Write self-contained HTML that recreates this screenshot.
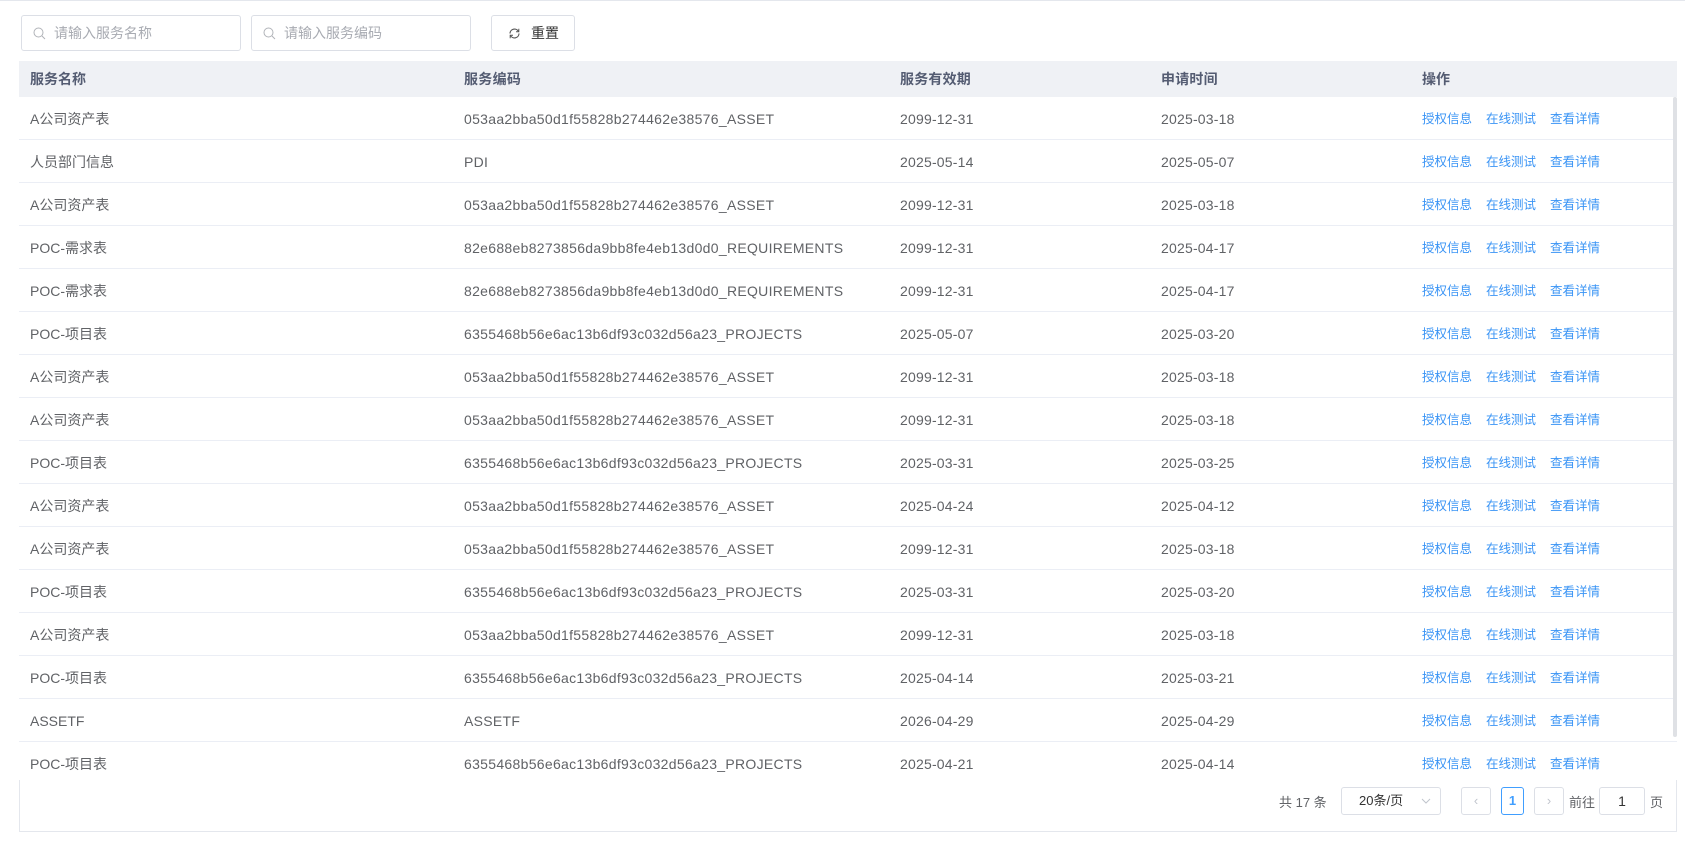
<!DOCTYPE html>
<html><head><meta charset="utf-8"><style>
*{box-sizing:border-box;margin:0;padding:0}
body{width:1685px;height:845px;background:#fff;font-family:"Liberation Sans","Noto Sans CJK SC",sans-serif;font-size:14px;color:#606266;position:relative;overflow:hidden}
.top{position:absolute;left:0;top:0;width:1685px;height:1px;background:#e4e7ed}
.inp{position:absolute;top:15px;height:36px;border:1px solid #dcdfe6;border-radius:3px;color:#a8abb2;font-size:14px;line-height:34px;padding-left:32px}
.inp svg{position:absolute;left:11px;top:11px}
.btn{position:absolute;left:491px;top:15px;width:84px;height:36px;border:1px solid #dcdfe6;border-radius:3px;line-height:34px;font-size:14px;color:#333;padding-left:39px}
.btn svg{position:absolute;left:16px;top:11px}
.tbl{position:absolute;left:19px;top:61px;width:1658px;height:719px;overflow:hidden}
.row{position:absolute;left:0;width:1658px;height:43px;border-bottom:1px solid #ebeef5;line-height:44px}
.hd{background:#eff1f5;height:36px;line-height:36px;font-weight:bold;color:#545c72;border:none}
.row span{position:absolute;white-space:nowrap}
.c1{left:11px}.c2{left:445px;letter-spacing:0.3px}.c3{left:881px;letter-spacing:0.2px}.c4{left:1142px;letter-spacing:0.2px}.c5{left:1403px}
.op{color:#3a94f5;font-size:12.5px}
.sb{position:absolute;left:1673px;top:97px;width:4px;height:640px;background:#dfe1e5;border-radius:2px}
.pg{position:absolute;left:19px;top:780px;width:1658px;height:52px;border:1px solid #e4e7ed;border-top:none;font-size:13px;color:#606266}
.pg div{position:absolute;top:7px;height:28px;line-height:26px;border:1px solid #dcdfe6;border-radius:3px;text-align:center}
</style></head><body>
<div class="top"></div>
<div class="inp" style="left:21px;width:220px"><svg width="13" height="13" viewBox="0 0 13 13"><circle cx="5.5" cy="5.5" r="4.5" fill="none" stroke="#b0b3b8" stroke-width="1"/><path d="M9 9l3 3" stroke="#b0b3b8"/></svg>请输入服务名称</div>
<div class="inp" style="left:251px;width:220px"><svg width="13" height="13" viewBox="0 0 13 13"><circle cx="5.5" cy="5.5" r="4.5" fill="none" stroke="#b0b3b8" stroke-width="1"/><path d="M9 9l3 3" stroke="#b0b3b8"/></svg>请输入服务编码</div>
<div class="btn"><svg width="13" height="13" viewBox="0 0 13 13"><path d="M2 6.5A4.5 4.5 0 0 1 10.5 4.5M11 6.5A4.5 4.5 0 0 1 2.5 8.5" fill="none" stroke="#555" stroke-width="1.1"/><path d="M10.8 1.8v2.9H8" fill="none" stroke="#555"/><path d="M2.2 11.2V8.3H5" fill="none" stroke="#555"/></svg>重置</div>
<div class="tbl">
<div class="row hd" style="top:0"><span class="c1">服务名称</span><span class="c2">服务编码</span><span class="c3">服务有效期</span><span class="c4">申请时间</span><span class="c5">操作</span></div>
</div>
<div class="sb"></div>
<div class="pg">
<span style="position:absolute;left:1259px;top:12px">共 17 条</span>
<div style="left:1321px;width:100px;color:#333;text-align:left;padding-left:17px">20条/页<svg style="position:absolute;right:9px;top:10px" width="10" height="6" viewBox="0 0 10 6"><path d="M1 1l4 4 4-4" fill="none" stroke="#c0c4cc"/></svg></div>
<div style="left:1441px;width:30px;color:#c0c4cc">‹</div>
<div style="left:1481px;width:23px;border-color:#409eff;color:#409eff;font-weight:bold">1</div>
<div style="left:1514px;width:30px;color:#c0c4cc">›</div>
<span style="position:absolute;left:1549px;top:12px">前往</span>
<div style="left:1579px;width:46px;color:#333;font-size:14px">1</div>
<span style="position:absolute;left:1630px;top:12px">页</span>
</div>
<script>
var d=[["A公司资产表","053aa2bba50d1f55828b274462e38576_ASSET","2099-12-31","2025-03-18"],["人员部门信息","PDI","2025-05-14","2025-05-07"],["A公司资产表","053aa2bba50d1f55828b274462e38576_ASSET","2099-12-31","2025-03-18"],["POC-需求表","82e688eb8273856da9bb8fe4eb13d0d0_REQUIREMENTS","2099-12-31","2025-04-17"],["POC-需求表","82e688eb8273856da9bb8fe4eb13d0d0_REQUIREMENTS","2099-12-31","2025-04-17"],["POC-项目表","6355468b56e6ac13b6df93c032d56a23_PROJECTS","2025-05-07","2025-03-20"],["A公司资产表","053aa2bba50d1f55828b274462e38576_ASSET","2099-12-31","2025-03-18"],["A公司资产表","053aa2bba50d1f55828b274462e38576_ASSET","2099-12-31","2025-03-18"],["POC-项目表","6355468b56e6ac13b6df93c032d56a23_PROJECTS","2025-03-31","2025-03-25"],["A公司资产表","053aa2bba50d1f55828b274462e38576_ASSET","2025-04-24","2025-04-12"],["A公司资产表","053aa2bba50d1f55828b274462e38576_ASSET","2099-12-31","2025-03-18"],["POC-项目表","6355468b56e6ac13b6df93c032d56a23_PROJECTS","2025-03-31","2025-03-20"],["A公司资产表","053aa2bba50d1f55828b274462e38576_ASSET","2099-12-31","2025-03-18"],["POC-项目表","6355468b56e6ac13b6df93c032d56a23_PROJECTS","2025-04-14","2025-03-21"],["ASSETF","ASSETF","2026-04-29","2025-04-29"],["POC-项目表","6355468b56e6ac13b6df93c032d56a23_PROJECTS","2025-04-21","2025-04-14"]];
var t=document.querySelector('.tbl'),h='';
d.forEach(function(r,i){h+='<div class="row" style="top:'+(36+i*43)+'px"><span class="c1">'+r[0]+'</span><span class="c2">'+r[1]+'</span><span class="c3">'+r[2]+'</span><span class="c4">'+r[3]+'</span><span class="c5 op">授权信息</span><span class="op" style="left:1467px">在线测试</span><span class="op" style="left:1531px">查看详情</span></div>'});
t.innerHTML+=h;
</script>
</body></html>
